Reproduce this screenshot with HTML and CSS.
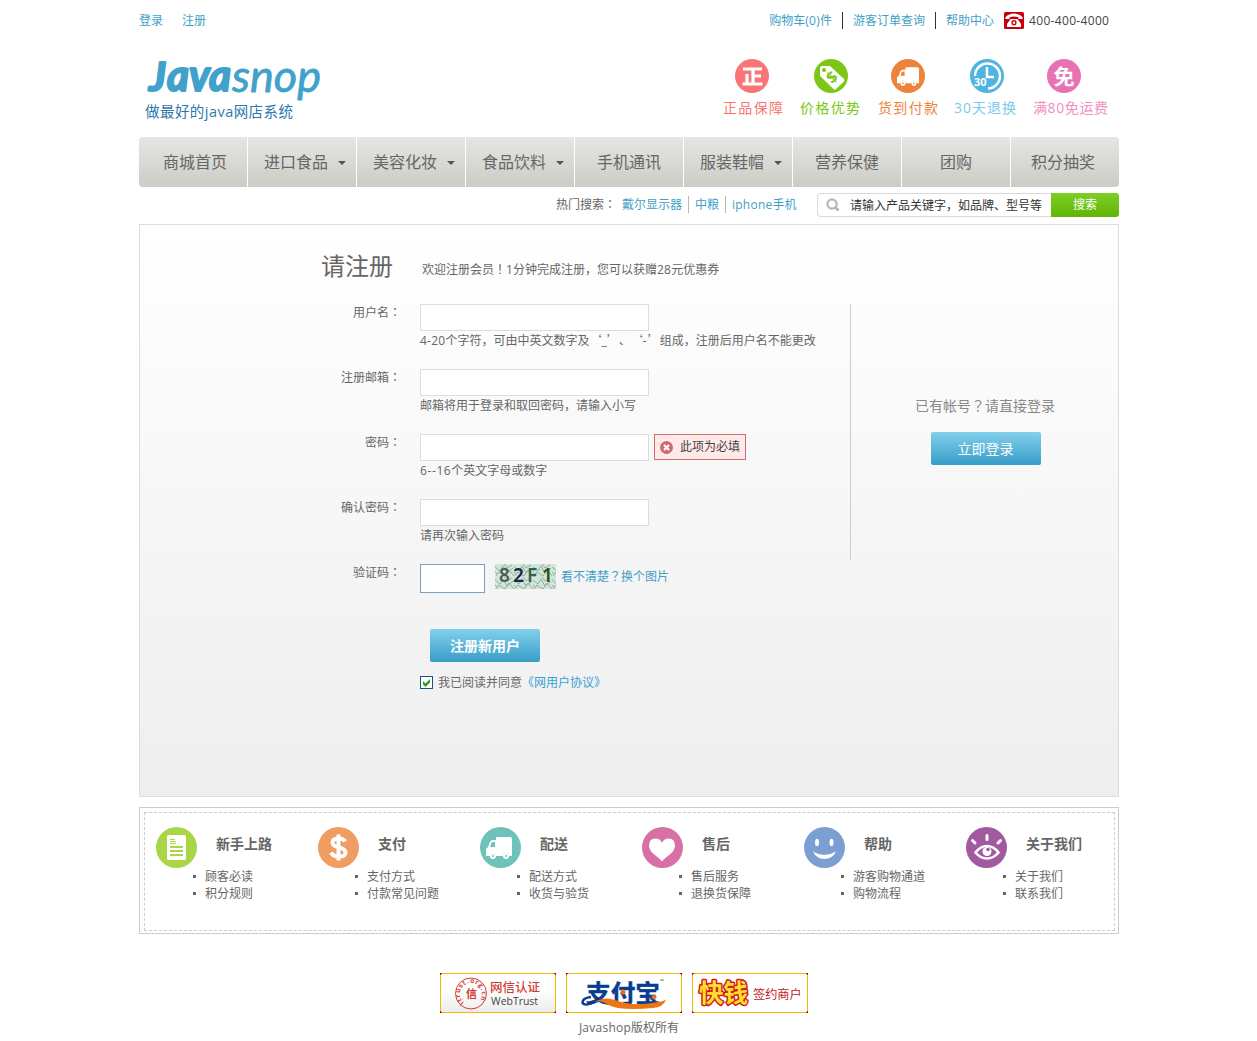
FILE: index.html
```
<!DOCTYPE html>
<html lang="zh-CN">
<head>
<meta charset="utf-8">
<title>Javashop 注册</title>
<link rel="stylesheet" href="styles.css">
</head>
<body>
<svg class="defs" aria-hidden="true">
  <symbol id="truck" viewBox="0 0 26 22"><path fill="#fff" d="M11 0h13a2 2 0 0 1 2 2v17h-3a3 3 0 0 0-6 0h-7a3 3 0 0 0-6 0H0v-7l2-2 2-5q.6-2 3-2h3V1q0-1 1-1ZM5.500 6 4 10h5V5H7q-1 0-1.500 1Z"/><path fill="#fff" fill-rule="evenodd" d="M7 16a3 3 0 1 1 0 6 3 3 0 0 1 0-6Zm0 2a1 1 0 1 0 0 2 1 1 0 0 0 0-2ZM20 16a3 3 0 1 1 0 6 3 3 0 0 1 0-6Zm0 2a1 1 0 1 0 0 2 1 1 0 0 0 0-2Z"/></symbol>
</svg>
<div class="page">
  <div class="topbar">
    <div class="account"><a>登录</a><a>注册</a></div>
    <div class="service">
      <a class="cart">购物车<span class="latin">(0)</span>件</a><a class="orders">游客订单查询</a><a>帮助中心</a>
      <svg class="phone" width="20" height="17" viewBox="0 0 20 17"><rect width="20" height="17" rx="1.500" fill="#c9000b"/><path fill="#fff" d="M1.500 7V5Q5 1.500 10 1.500T18.500 5v2h-4V5.200Q10 4 5.500 5.200V7ZM6.500 7h7l3.500 5v3H3v-3Z"/><circle cx="10" cy="10.700" r="2.600" fill="#c9000b"/><circle cx="10" cy="10.700" r="1.200" fill="#fff"/></svg>
      <span class="tel">400-400-4000</span>
    </div>
  </div>

  <div class="header">
    <svg class="logo" width="184" height="72" viewBox="0 0 184 72">
      <g font-family="Lato, sans-serif" font-style="italic" fill="#40a1cb">
        <g font-weight="700" stroke="#40a1cb" stroke-width="2" stroke-linejoin="round"><text x="10" y="34" font-size="41" textLength="17" lengthAdjust="spacingAndGlyphs">J</text><text x="28" y="34" font-size="43" textLength="64" lengthAdjust="spacingAndGlyphs">ava</text></g>
        <text x="93" y="34.500" font-size="45" textLength="89" lengthAdjust="spacingAndGlyphs" stroke="#40a1cb" stroke-width=".8" stroke-linejoin="round">snop</text>
      </g>
      <text class="slogan" x="6" y="60" textLength="148">做最好的java网店系统</text>
    </svg>
    <div class="features">
      <svg width="60" height="62" viewBox="0 0 60 62"><circle cx="29" cy="19" r="17" fill="#fa7575"/><path d="M20 12h19M30 12v15M30 19h8M24 17v10M19.500 27h20" stroke="#fff" stroke-width="3.200" fill="none"/><text class="cap" x="0" y="56" textLength="60" fill="#fa7575">正品保障</text></svg>
      <svg width="60" height="62" viewBox="0 0 60 62"><circle cx="31" cy="19" r="17" fill="#7cc614"/><path d="M20 11q0-2 2-2h8l14 13q1 1 0 2.500L36 32q-1 1-2.500 0L20 19Z" fill="#fff"/><circle cx="24" cy="13" r="2" fill="#7cc614"/><text x="28" y="26" font-size="16" font-weight="700" fill="#7cc614" transform="rotate(-42 32 21)">$</text><text class="cap" x="0" y="56" textLength="60" fill="#7cc614">价格优势</text></svg>
      <svg width="60" height="62" viewBox="0 0 60 62"><circle cx="31" cy="19" r="17" fill="#ee843c"/><use href="#truck" x="20" y="10" width="22" height="19"/><text class="cap" x="1" y="56" textLength="60" fill="#ee843c">货到付款</text></svg>
      <svg width="62" height="62" viewBox="0 0 62 62"><circle cx="33" cy="19" r="17" fill="#4fb4e1"/><path d="M21 19a12.500 12.500 0 1 1 13 12.500" stroke="#fff" stroke-width="2.500" fill="none"/><path d="M33 10v10h7" stroke="#fff" stroke-width="2.500" fill="none"/><text x="20" y="29" font-size="11" font-weight="700" fill="#fff">30</text><text class="cap" x="0" y="56" textLength="62" fill="#7cc9ea">30天退换</text></svg>
      <svg width="76" height="62" viewBox="0 0 76 62"><circle cx="31" cy="19" r="17" fill="#e773b5"/><text class="free" x="20.500" y="27">免</text><text class="cap" x="0" y="56" textLength="75" fill="#ef8fc3">满80免运费</text></svg>
    </div>
  </div>

  <div class="nav">
    <a class="home">商城首页</a><a class="drop">进口食品</a><a class="drop">美容化妆</a><a class="drop">食品饮料</a><a>手机通讯</a><a class="drop">服装鞋帽</a><a>营养保健</a><a>团购</a><a class="lottery">积分抽奖</a>
  </div>

  <div class="searchbar">
    <span class="hot">热门搜索<span class="mid" lang="zh-TW">：</span></span><a>戴尔显示器</a><a>中粮</a><a><span class="latin">iphone</span>手机</a>
    <div class="search">
      <svg width="14" height="14" viewBox="0 0 14 14"><circle cx="6" cy="6" r="4.600" fill="none" stroke="#b5b5b5" stroke-width="2.200"/><path d="m9.500 9.500 3 3" stroke="#b5b5b5" stroke-width="2.600"/></svg>
      <span>请输入产品关键字，如品牌、型号等</span>
    </div>
    <div class="go">搜索</div>
  </div>

  <div class="panel">
    <div class="heading"><h1>请注册</h1><p>欢迎注册会员<span class="mid" lang="zh-TW">！</span>1分钟完成注册，您可以获赠<span class="latin">28</span>元优惠券</p></div>
    <div class="columns">
      <div class="form">
        <div class="row"><label>用户名<span class="mid" lang="zh-TW">：</span></label><div><div class="line"><div class="box"></div></div><p class="hint"><span class="latin">4-20</span>个字符，可由中英文数字及<span class="full">‘</span>_<span class="full">’、‘</span><span class="dash">-</span><span class="full">’</span>组成，注册后用户名不能更改</p></div></div>
        <div class="row"><label>注册邮箱<span class="mid" lang="zh-TW">：</span></label><div><div class="line"><div class="box"></div></div><p class="hint">邮箱将用于登录和取回密码，请输入小写</p></div></div>
        <div class="row"><label>密码<span class="mid" lang="zh-TW">：</span></label><div><div class="line"><div class="box"></div><div class="error"><svg width="13" height="13" viewBox="0 0 13 13"><circle cx="6.500" cy="6.500" r="6.500" fill="#d16a6e"/><path d="m4 4 5 5M9 4 4 9" stroke="#fff" stroke-width="2.200"/></svg>此项为必填</div></div><p class="hint"><span class="latin wide">6--16</span>个英文字母或数字</p></div></div>
        <div class="row"><label>确认密码<span class="mid" lang="zh-TW">：</span></label><div><div class="line"><div class="box"></div></div><p class="hint">请再次输入密码</p></div></div>
        <div class="row"><label>验证码<span class="mid" lang="zh-TW">：</span></label><div class="line"><div class="box code"></div>
          <svg class="captcha" width="61" height="25" viewBox="0 0 61 25">
            <defs><pattern id="noise" width="19" height="13" patternUnits="userSpaceOnUse"><path d="m0 3 5 4 3-5 4 7 6-5M1 12l3-4 6 4 4-6 5 6M9 0l3 4 5-3M0 8l2 2" fill="none" stroke="#8fa698" stroke-width=".9"/></pattern></defs>
            <rect width="61" height="25" fill="#cfe6d8"/><rect width="61" height="25" fill="url(#noise)"/>
            <g font-family="Noto Sans, sans-serif" font-size="19" font-weight="600"><text x="4" y="18" fill="#4d5c50">8</text><text x="18" y="18" fill="#1b2748">2</text><text x="32" y="18" fill="#35634a">F</text><text x="47" y="18" fill="#28541a">1</text></g>
          </svg>
          <a class="change">看不清楚<span class="mid" lang="zh-TW">？</span>换个图片</a></div></div>
        <div class="actions">
          <div class="button register">注册新用户</div>
          <div class="agree"><svg width="13" height="13" viewBox="0 0 13 13"><rect x=".5" y=".5" width="12" height="12" fill="#fff" stroke="#1c5180"/><path d="M3 5 5.500 7.500 10 3v3.500L5.500 11 3 8.500Z" fill="#21a121"/></svg><span>我已阅读并同意<a class="terms">《网用户协议》</a></span></div>
        </div>
      </div>
      <div class="aside"><p>已有帐号<span class="mid" lang="zh-TW">？</span>请直接登录</p><div class="button">立即登录</div></div>
    </div>
  </div>

  <div class="help"><div class="help-inner">
    <div class="topic">
      <svg width="41" height="41" viewBox="0 0 41 41"><circle cx="20.500" cy="20.500" r="20.500" fill="#a9d645"/><rect x="11" y="8" width="19" height="25" rx="1.500" fill="#fff"/><path d="M14 12.500h5M14 14.500h6M14 16.500h6" stroke="#a9d645"/><path d="M14 20h13M14 24h13M14 28h13" stroke="#a9d645" stroke-width="1.800"/></svg>
      <h2>新手上路</h2><ul><li>顾客必读</li><li>积分规则</li></ul></div>
    <div class="topic">
      <svg width="41" height="41" viewBox="0 0 41 41"><circle cx="20.500" cy="20.500" r="20.500" fill="#ef9d62"/><path d="M27 14.500q-1.500-3-6.500-3-6 0-6 4 0 3.500 6.500 5t6.500 5q0 4-6.500 4-6 0-8-4M20.500 7.500v26" stroke="#fff" stroke-width="4" fill="none"/></svg>
      <h2>支付</h2><ul><li>支付方式</li><li>付款常见问题</li></ul></div>
    <div class="topic">
      <svg width="41" height="41" viewBox="0 0 41 41"><circle cx="20.500" cy="20.500" r="20.500" fill="#6dc3ba"/><use href="#truck" x="6" y="10" width="26" height="22"/></svg>
      <h2>配送</h2><ul><li>配送方式</li><li>收货与验货</li></ul></div>
    <div class="topic">
      <svg width="41" height="41" viewBox="0 0 41 41"><circle cx="20.500" cy="20.500" r="20.500" fill="#d770a5"/><path d="M20 34.500C16 29 7 26 7 18.500q0-7 6.500-7 5 0 6.500 4.500 1.500-4.500 6.500-4.500 6.500 0 6.500 7C33 26 24 29 20 34.500Z" fill="#fff"/></svg>
      <h2>售后</h2><ul><li>售后服务</li><li>退换货保障</li></ul></div>
    <div class="topic">
      <svg width="41" height="41" viewBox="0 0 41 41"><circle cx="20.500" cy="20.500" r="20.500" fill="#7b9fd3"/><ellipse cx="13" cy="15.500" rx="2" ry="3.800" fill="#fff"/><ellipse cx="27.500" cy="15.500" rx="2" ry="3.800" fill="#fff"/><path d="M9 24.500q11 7 23 0-3.500 7.500-11.500 7.500T9 24.500Z" fill="#fff"/></svg>
      <h2>帮助</h2><ul><li>游客购物通道</li><li>购物流程</li></ul></div>
    <div class="topic">
      <svg width="41" height="41" viewBox="0 0 41 41"><circle cx="20.500" cy="20.500" r="20.500" fill="#a15aa0"/><path d="M9.500 25.500q5-6.500 11.500-6.500t11.500 6.500Q27.500 31.500 21 31.500T9.500 25.500Z" fill="none" stroke="#fff" stroke-width="2.600"/><circle cx="21" cy="24.500" r="4.500" fill="#fff"/><circle cx="22" cy="22.500" r="1.800" fill="#a15aa0"/><path d="M21 8.500v4M6.500 13.500l2.500 2.500M34.500 13.500 32 16" stroke="#fff" stroke-width="3" stroke-linecap="round"/></svg>
      <h2>关于我们</h2><ul><li>关于我们</li><li>联系我们</li></ul></div>
  </div></div>

  <div class="badges">
    <svg width="116" height="40" viewBox="0 0 116 40"><defs><linearGradient id="fade" x2="0" y2="1"><stop offset=".4" stop-color="#fff"/><stop offset="1" stop-color="#ececec"/></linearGradient><path id="ring" d="M24 29.500A11 11 0 1 1 39 28.500"/></defs><rect x=".5" y=".5" width="115" height="39" fill="url(#fade)" stroke="#f6b800"/><path d="M0 0h2v1H1v1H0ZM114 0h2v2h-1V1h-1ZM0 38h1v1h1v1H0ZM115 38h1v2h-2v-1h1Z" fill="#b50d0d"/><circle cx="31" cy="20.500" r="15.500" fill="none" stroke="#d23c36"/><text font-size="6.500" font-weight="700" fill="#d23c36"><textPath href="#ring" textLength="50">itrust.org.cn</textPath></text><text x="26" y="25" font-size="11" font-weight="700" fill="#d23c36">信</text><text x="50" y="19" font-size="12.500" font-weight="500" fill="#d23c36">网信认证</text><text x="51" y="32" font-size="10.500" fill="#444" textLength="47" lengthAdjust="spacingAndGlyphs">WebTrust</text></svg>
    <svg width="116" height="40" viewBox="0 0 116 40"><rect x=".5" y=".5" width="115" height="39" fill="#fff" stroke="#f6b800"/><path d="M0 0h2v1H1v1H0ZM114 0h2v2h-1V1h-1ZM0 38h1v1h1v1H0ZM115 38h1v2h-2v-1h1Z" fill="#b50d0d"/><text x="20" y="28.500" font-size="24" font-weight="700" fill="#073d90" stroke="#073d90" stroke-width=".5" textLength="74" lengthAdjust="spacingAndGlyphs">支付宝</text><path d="M25 24q-9 1-8.500 6 3 4 13-2" stroke="#073d90" stroke-width="2.500" fill="none"/><path d="M28 29q11-6 21-2 13 5 27 4 15-1 24-4-3 7-13 8-22 2-35 0-9-2-13-5-6-3-11-1Z" fill="#ef7414"/><path d="m57 16 3 3-3 3-3-3ZM88 21l3 3-3 3-3-3Z" fill="#f26c13"/><text x="94" y="10" font-size="5" fill="#333">™</text></svg>
    <svg width="116" height="40" viewBox="0 0 116 40"><rect x=".5" y=".5" width="115" height="39" fill="#fff" stroke="#f6b800"/><path d="M0 0h2v1H1v1H0ZM114 0h2v2h-1V1h-1ZM0 38h1v1h1v1H0ZM115 38h1v2h-2v-1h1Z" fill="#b50d0d"/><text x="7" y="29" font-size="24.500" font-weight="700" fill="#ffdf2b" stroke="#cf1e1e" stroke-width="3" stroke-linejoin="round" paint-order="stroke">快钱</text><text x="61" y="26" font-size="12.200" fill="#c4161c">签约商户</text></svg>
  </div>
  <p class="copyright"><span class="latin">Javashop</span>版权所有</p>
</div>
</body>
</html>
```
FILE: styles.css
```
* { box-sizing: border-box; }
body { margin: 0; padding-left: 1px; background: #fff; color: #666; font: 12px/18px "Open Sans", "Noto Sans CJK SC", sans-serif; text-spacing-trim: space-all; }
h1, h2, p, ul { margin: 0; padding: 0; font-weight: 400; }
svg { display: block; flex: none; overflow: visible; }
a { color: #419fc7; white-space: nowrap; }
.defs { position: absolute; width: 0; height: 0; }
.page { width: 980px; height: 1041px; margin: 0 auto; overflow: hidden; }
.latin { letter-spacing: .25px; }
.wide { letter-spacing: .6px; }
.dash { letter-spacing: 1px; }
.mid { font-family: "Noto Sans CJK TC", sans-serif; line-height: 1; }
.full { font-family: "Noto Sans CJK SC", sans-serif; line-height: 1; }

.topbar { display: flex; justify-content: space-between; height: 57px; padding: 12px 10px 0 0; }
.account { display: flex; gap: 19px; }
.service { display: flex; align-items: flex-start; color: #444; }
.cart, .orders { position: relative; margin-right: 21px; }
.cart::after, .orders::after { content: ""; position: absolute; right: -11px; top: 0; width: 1px; height: 17px; background: #333; }
.phone { margin: 0 5px 0 10px; }
.tel { width: 80px; letter-spacing: .33px; white-space: nowrap; }

.header { display: flex; justify-content: space-between; height: 80px; padding-right: 10px; }
.features { display: flex; gap: 17px; }
.slogan { font-size: 14.500px; fill: #2c78aa; }
.cap { font-size: 14px; font-weight: 400; }
.free { font-size: 21px; font-weight: 700; fill: #fff; }

.nav { display: grid; grid-template-columns: repeat(8, 109px) 108px; height: 50px; border-radius: 4px; overflow: hidden; background: linear-gradient(#e5e6e4, #ccccc6); }
.nav a { display: flex; align-items: center; justify-content: center; border-right: 1px solid #fff; font-size: 16px; color: #666; }
.nav .home { padding-left: 4px; }
.nav .lottery { padding-right: 4px; border: 0; }
.nav .drop { justify-content: flex-start; gap: 10px; padding-left: 16px; }
.drop::after { content: ""; margin-top: 2px; border: 4px solid transparent; border-top-color: #555; border-bottom: 0; }

.searchbar { display: flex; align-items: flex-start; justify-content: flex-end; height: 37px; padding-top: 6px; }
.hot { margin-top: 3px; margin-right: 6px; }
.searchbar a { margin-top: 3px; line-height: 17px; padding-right: 6px; margin-right: 6px; border-right: 1px solid #bbb8aa; }
.searchbar a:nth-of-type(2) { margin-right: 6px; }
.searchbar a:nth-of-type(3) { border: 0; padding: 0; margin-right: 20.500px; }
.search { display: flex; align-items: center; gap: 10px; width: 234px; height: 24px; padding-left: 8px; border: 1px solid #dadada; border-right: 0; border-radius: 4px 0 0 4px; color: #333; white-space: nowrap; }
.search span { padding-top: 1px; }
.go { width: 68px; height: 24px; border-radius: 0 3px 3px 0; background: linear-gradient(#7ece28, #5fb500); color: #fff; line-height: 24px; text-align: center; }

.panel { height: 573px; border: 1px solid #ddd; background: linear-gradient(#fff, #eee); }
.heading { display: flex; gap: 29px; height: 79px; padding: 24px 0 0 181px; }
h1 { font-size: 24px; line-height: 34px; }
.heading p { padding-top: 12px; }
.columns { display: flex; align-items: flex-start; }
.form { width: 710px; }
.row { display: grid; grid-template-columns: 261px 1fr; column-gap: 19px; height: 65px; }
label { text-align: right; line-height: 17px; }
.line { display: flex; align-items: flex-start; }
.box { width: 229px; height: 27px; border: 1px solid #ddd; background: #fff; }
.hint { padding-top: 1px; white-space: nowrap; }
.error { display: flex; align-items: center; gap: 7px; width: 92px; height: 26px; margin-left: 5px; padding-left: 5px; border: 1px solid #d4696e; background: #ffe9e9; color: #444; white-space: nowrap; }
.code { width: 65px; height: 29px; border-color: #7b9ebd; }
.captcha { margin-left: 10px; }
.change { margin: 4px 0 0 5px; }
.actions { padding-left: 280px; }
.button { width: 110px; height: 33px; border-radius: 2px; background: linear-gradient(#83d0ec, #379dc8); color: #fff; font-size: 14px; line-height: 33px; text-align: center; }
.register { margin-left: 10px; font-weight: 700; }
.agree { display: flex; align-items: center; gap: 5px; margin-top: 11px; height: 19px; }
.terms { color: #35a1d3; }
.aside { display: flex; flex-direction: column; align-items: center; flex: 1; height: 256px; padding: 92px 0 0 2px; border-left: 1px solid #ccc; }
.aside p { margin-right: 1px; color: #888; font-size: 14px; line-height: 20px; }
.aside .button { margin-top: 16px; }

.help { height: 127px; margin-top: 10px; padding: 4px 3px 4px 4px; border: 1px solid #ccc; }
.help-inner { display: grid; grid-template-columns: repeat(6, 162px); height: 119px; padding: 14px 0 0 11px; overflow: hidden; border: 1px dashed #ccc; }
.topic { display: grid; grid-template-columns: 41px 1fr; column-gap: 19px; grid-template-rows: 41px auto; align-items: start; }
h2 { font-size: 14px; font-weight: 700; line-height: 34px; }
.topic ul { grid-column: 1 / 3; padding-left: 37px; list-style: none; line-height: 17px; }
.topic li { display: flex; align-items: center; gap: 9px; }
.topic li::before { content: ""; width: 3px; height: 3px; background: #666; }

.badges { display: flex; justify-content: center; gap: 10px; margin-top: 39px; padding-right: 10px; }
.copyright { margin-top: 6px; text-align: center; }
```
